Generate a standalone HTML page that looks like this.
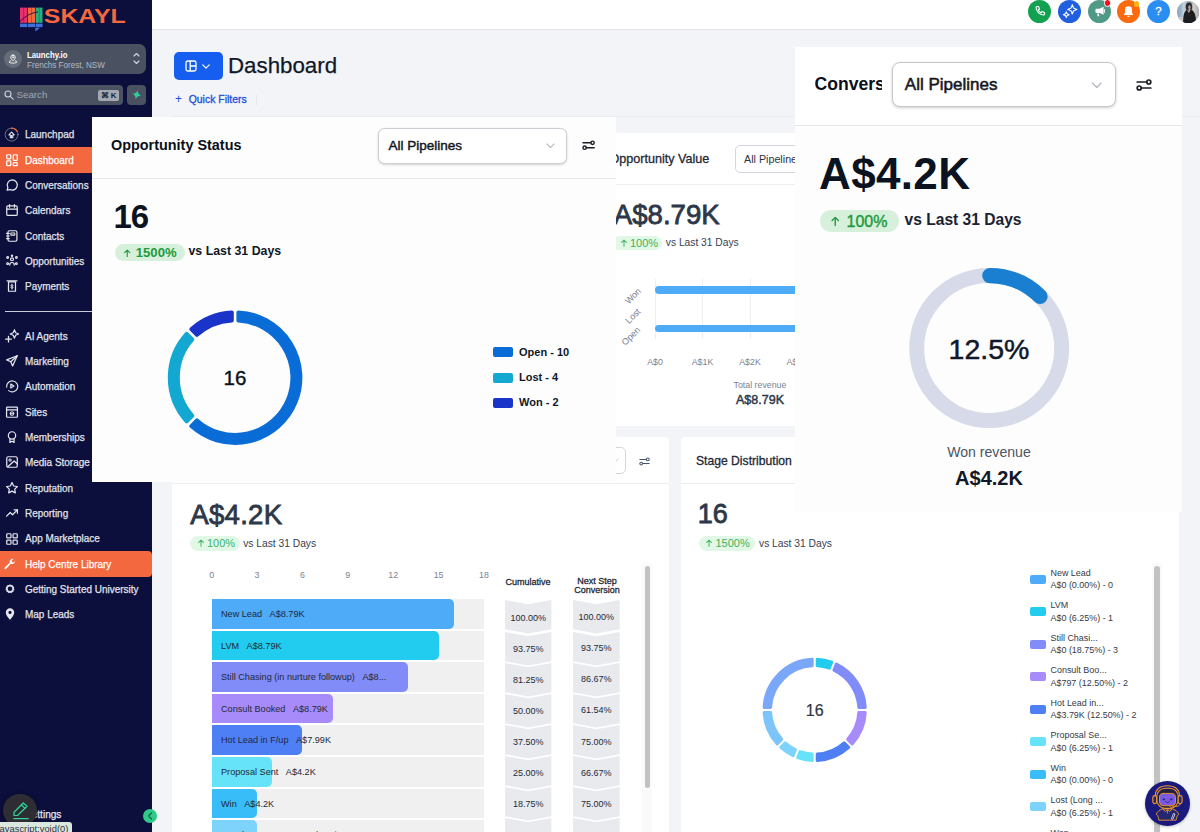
<!DOCTYPE html>
<html lang="en">
<head>
<meta charset="utf-8">
<title>Dashboard</title>
<style>
*{box-sizing:border-box;margin:0;padding:0}
html,body{width:1200px;height:832px;overflow:hidden;background:#f2f4f8;font-family:"Liberation Sans",sans-serif;color:#1f2937}
.abs{position:absolute}
.nw{white-space:nowrap}
#root{position:relative;width:1200px;height:832px;overflow:hidden;background:#f2f4f8}
#side{left:0;top:0;width:152px;height:832px;background:#0c0e3b}
#topbar{left:152px;top:0;width:1048px;height:30px;background:#fff;border-bottom:1px solid #e1e3e8}
.acct{left:0;top:44.2px;width:146px;height:29.6px;background:#4a5262;border-radius:0 7px 7px 0}
.acct .t1{left:26.5px;top:5.4px;font-size:8.8px;font-weight:700;color:#fff;transform:scaleX(.885);transform-origin:0 50%}
.acct .t2{left:26.5px;top:16.1px;font-size:8.6px;color:#b4b9c4;transform:scaleX(.943);transform-origin:0 50%}
.acct .av{left:4px;top:5.5px;width:18px;height:18px;border-radius:50%;background:#656c79}
.srch{left:0;top:85px;width:122.5px;height:20px;background:#4a5262;border-radius:0 4px 4px 0}
.srch .st{left:16.6px;top:4.3px;font-size:9.7px;color:#a0a6b2}
.srch .kb{left:98px;top:4.5px;width:21px;height:11.5px;background:#a3a8b2;border-radius:2px;font-size:8px;color:#20242f;text-align:center;line-height:11.5px;font-weight:700}
.gbtn{left:126.5px;top:85px;width:19.5px;height:20px;background:#4a5262;border-radius:4px}
.mi{left:0;width:152px;height:25.5px;color:#e2e4ec;font-size:11px;white-space:nowrap}
.mi span{position:absolute;left:24.6px;top:6.5px;transform:scaleX(.905);transform-origin:0 50%;-webkit-text-stroke:.25px currentColor}
.mi svg{position:absolute;left:5px;top:5.6px;width:14px;height:14px;stroke:#e6e8f0;fill:none;stroke-width:1.4;stroke-linecap:round;stroke-linejoin:round}
.mi.act{background:#f4683f;color:#fff}
.mi.act svg{stroke:#fff}
.card{background:#fff;border-radius:4px}
.pill{background:#ddf6e3;color:#3aa856;border-radius:9px;white-space:nowrap}
.hb{border-bottom:1px solid #e8eaee}
.sel{border:1px solid #d4d7dd;border-radius:5px;background:#fff}
.med{-webkit-text-stroke:.3px currentColor}
</style>
</head>
<body>
<div id="root">
<div id="topbar" class="abs"></div>

<div class="abs" style="left:1028px;top:-0.5px;width:23px;height:23px;border-radius:50%;background:#12a150"></div>
<svg class="abs" style="left:1033.5px;top:5px;width:12px;height:12px" viewBox="0 0 24 24" fill="none" stroke="#fff" stroke-width="2.2" stroke-linecap="round" stroke-linejoin="round"><path d="M6 3h3l2 5-2.5 1.5a11 11 0 0 0 6 6L16 13l5 2v3a2 2 0 0 1-2 2A16 16 0 0 1 4 5a2 2 0 0 1 2-2z"/></svg>
<div class="abs" style="left:1058px;top:-0.5px;width:23px;height:23px;border-radius:50%;background:#1f5fe0"></div>
<svg class="abs" style="left:1061.5px;top:3px;width:16px;height:16px" viewBox="0 0 16 16" fill="none" stroke="#fff" stroke-width="1.1" stroke-linejoin="round"><path d="M10.3 1.8l1.3 3.3 3.3 1.3-3.3 1.3-1.3 3.3L9 7.7 5.7 6.4 9 5.1z"/><path d="M4.3 8.8l.85 2.05 2.05.85-2.05.85-.85 2.05-.85-2.05-2.05-.85 2.05-.85z"/></svg>
<div class="abs" style="left:1087.5px;top:-0.5px;width:23px;height:23px;border-radius:50%;background:#4f9a86"></div>
<svg class="abs" style="left:1092.5px;top:5px;width:13px;height:13px" viewBox="0 0 16 16" fill="#fff" stroke="none"><path d="M13 2v10l-5-2.2H4.5A1.5 1.5 0 0 1 3 8.3V6.2a1.5 1.5 0 0 1 1.5-1.5H8z"/><path d="M5 10.5h2.2l.6 3.3H5.8z"/><path d="M14 5.5v3.6" stroke="#fff" stroke-width="1.2" stroke-linecap="round"/></svg>
<div class="abs" style="left:1103.5px;top:-1px;width:7.5px;height:7.5px;border-radius:50%;background:#f0101c;border:1px solid #fff"></div>
<div class="abs" style="left:1117.3px;top:-0.5px;width:23px;height:23px;border-radius:50%;background:#fb6a0e"></div>
<svg class="abs" style="left:1122.3px;top:4.5px;width:13px;height:13px" viewBox="0 0 16 16" fill="#fff" stroke="none"><path d="M8 1.5a4.3 4.3 0 0 0-4.3 4.3v3.4L2.4 11.6v.7h11.2v-.7l-1.3-2.4V5.8A4.3 4.3 0 0 0 8 1.5z"/><path d="M6.5 13.2a1.5 1.5 0 0 0 3 0z"/></svg>
<div class="abs" style="left:1133.5px;top:1px;width:5.5px;height:5.5px;border-radius:50%;background:#fbb514"></div>
<div class="abs" style="left:1147px;top:-0.5px;width:23px;height:23px;border-radius:50%;background:#2a8df2;color:#fff;font-size:11.5px;text-align:center;line-height:23px;-webkit-text-stroke:.3px #fff">?</div>
<svg class="abs" style="left:1176.8px;top:.5px;width:22.4px;height:22.4px" viewBox="0 0 62 62"><defs><clipPath id="avc"><circle cx="31" cy="31" r="31"/></clipPath><linearGradient id="avg" x1="0" x2="1" y1="0" y2="0"><stop offset="0" stop-color="#8fa3b3"/><stop offset=".18" stop-color="#9db6cc"/><stop offset=".3" stop-color="#c5d3dc"/><stop offset=".62" stop-color="#9a9c9c"/><stop offset=".75" stop-color="#cfcfcf"/><stop offset="1" stop-color="#a9aaab"/></linearGradient></defs>
<g clip-path="url(#avc)"><rect width="62" height="62" fill="url(#avg)"/><rect x="0" y="44" width="20" height="18" fill="#c9c9cb"/>
<ellipse cx="33" cy="16" rx="9" ry="12" fill="#2a2d35"/><ellipse cx="34.5" cy="17.5" rx="3.3" ry="5.5" fill="#b79a8d"/><rect x="32" y="22" width="5" height="12" fill="#c4a99b"/>
<path d="M17 62C17 40 20 28 27 25l6 8 5-9c9 2 15 12 15 38z" fill="#1b1c22"/><rect x="30" y="37" width="7" height="4" fill="#3a2318"/></g></svg>


<div class="abs" style="left:174px;top:52px;width:48.5px;height:27.5px;border-radius:5px;background:#155eef"></div>
<svg class="abs" style="left:185px;top:59.5px;width:12px;height:12px" viewBox="0 0 12 12" fill="none" stroke="#fff" stroke-width="1.3" stroke-linejoin="round"><rect x="1" y="1" width="10" height="10" rx="1.8"/><path d="M5.2 1v10M5.2 6H11"/></svg>
<svg class="abs" style="left:201.5px;top:63.5px;width:8px;height:5px" viewBox="0 0 10 6" fill="none" stroke="#fff" stroke-width="1.5" stroke-linecap="round" stroke-linejoin="round"><path d="M1 1l4 4 4-4"/></svg>
<div class="abs nw" style="left:228px;top:52.5px;font-size:22.3px;line-height:26px;color:#101828;-webkit-text-stroke:.25px #101828">Dashboard</div>
<div class="abs nw" style="left:175px;top:92.5px;font-size:12px;line-height:13px;color:#1d4ed8">+</div>
<div class="abs nw med" style="left:188.7px;top:93px;font-size:10.45px;line-height:13px;color:#1d4ed8">Quick Filters</div>
<div class="abs" style="left:256px;top:95px;width:1px;height:10px;background:#e4e7ec"></div>
<div class="abs" style="left:172px;top:115.5px;width:1028px;height:1px;background:#e9ebf0"></div>


<div class="abs card" style="left:500px;top:133px;width:340px;height:292.7px"></div>
<div class="abs" style="left:500px;top:184px;width:340px;height:1px;background:#eceef2"></div>
<div class="abs nw med" style="left:609.5px;top:151.5px;font-size:12.6px;line-height:14px;color:#1f2937">Opportunity Value</div>
<div class="abs sel" style="left:734.5px;top:144.5px;width:120px;height:28.5px;border-radius:5px"></div>
<div class="abs nw" style="left:743.5px;top:151.5px;font-size:11.6px;line-height:14px;color:#2b3340;transform:scaleX(.925);transform-origin:0 50%">All Pipelines</div>
<div class="abs nw" style="left:613.8px;top:199.3px;font-size:27.6px;line-height:31px;color:#2d3748;-webkit-text-stroke:.8px #2d3748">A$8.79K</div>
<div class="abs pill" style="left:612px;top:235.5px;width:49.7px;height:14.3px;border-radius:7px;background:#e2f8e7"></div>
<svg class="abs" style="left:619.5px;top:238.5px;width:8px;height:8px" viewBox="0 0 10 10" fill="none" stroke="#4ab765" stroke-width="1.3" stroke-linecap="round" stroke-linejoin="round"><path d="M5 9V1.5M2 4.3l3-3 3 3"/></svg>
<div class="abs nw" style="left:630px;top:236.5px;font-size:11px;line-height:13px;color:#41b25f">100%</div>
<div class="abs nw" style="left:665.8px;top:235.5px;font-size:10.25px;line-height:13px;color:#374151">vs Last 31 Days</div>
<div class="abs" style="left:655px;top:279px;width:1px;height:60px;background:#eceef2"></div><div class="abs" style="left:702.2px;top:279px;width:1px;height:60px;background:#eceef2"></div><div class="abs" style="left:749.8px;top:279px;width:1px;height:60px;background:#eceef2"></div>
<div class="abs" style="left:655px;top:286px;width:160px;height:7.5px;border-radius:4px 0 0 4px;background:#4dabf7"></div>
<div class="abs" style="left:655px;top:324.5px;width:160px;height:7.5px;border-radius:4px 0 0 4px;background:#4dabf7"></div>
<div class="abs nw" style="left:612.5px;top:290px;width:40px;height:12px;line-height:12px;text-align:center;font-size:9px;color:#7b8190;transform:rotate(-45deg)">Won</div><div class="abs nw" style="left:612.5px;top:309.5px;width:40px;height:12px;line-height:12px;text-align:center;font-size:9px;color:#7b8190;transform:rotate(-45deg)">Lost</div><div class="abs nw" style="left:611px;top:329.5px;width:40px;height:12px;line-height:12px;text-align:center;font-size:9px;color:#7b8190;transform:rotate(-45deg)">Open</div>
<div class="abs nw" style="left:635px;top:355.5px;width:40px;text-align:center;font-size:8.8px;line-height:12px;color:#7b8190">A$0</div>
<div class="abs nw" style="left:682.5px;top:355.5px;width:40px;text-align:center;font-size:8.8px;line-height:12px;color:#7b8190">A$1K</div>
<div class="abs nw" style="left:730px;top:355.5px;width:40px;text-align:center;font-size:8.8px;line-height:12px;color:#7b8190">A$2K</div>
<div class="abs nw" style="left:786.5px;top:355.5px;font-size:8.8px;line-height:12px;color:#7b8190">A$3K</div>
<div class="abs nw" style="left:720px;top:378.5px;width:80px;text-align:center;font-size:8.8px;line-height:12px;color:#7b8190">Total revenue</div>
<div class="abs nw" style="left:720px;top:392.5px;width:80px;text-align:center;font-size:12.5px;line-height:15px;color:#2d3748;-webkit-text-stroke:.45px #2d3748">A$8.79K</div>


<div class="abs card" style="left:172px;top:437.4px;width:497px;height:400px"></div>
<div class="abs" style="left:172px;top:482.5px;width:497px;height:1px;background:#eceef2"></div>
<div class="abs sel" style="left:520px;top:447.2px;width:106px;height:27.2px"></div>
<svg class="abs" style="left:612px;top:458px;width:7px;height:4.5px" viewBox="0 0 10 6" fill="none" stroke="#b8bcc4" stroke-width="1.2" stroke-linecap="round" stroke-linejoin="round"><path d="M1 1l4 4 4-4"/></svg>
<svg class="abs" style="left:638.5px;top:456.5px;width:11px;height:9px" viewBox="0 0 16 12" fill="none" stroke="#475467" stroke-width="1.5" stroke-linecap="round"><path d="M1.2 3h9.6M5.2 9h9.6"/><circle cx="12.8" cy="3" r="2"/><circle cx="3.2" cy="9" r="2"/></svg>
<div class="abs nw" style="left:190.3px;top:498.5px;font-size:27.6px;line-height:31px;color:#2d3748;-webkit-text-stroke:.8px #2d3748;letter-spacing:.25px">A$4.2K</div>
<div class="abs pill" style="left:190px;top:535.7px;width:49.5px;height:15.3px;border-radius:7.5px;background:#e2f8e7"></div>
<svg class="abs" style="left:196.5px;top:539.2px;width:8px;height:8px" viewBox="0 0 10 10" fill="none" stroke="#4ab765" stroke-width="1.3" stroke-linecap="round" stroke-linejoin="round"><path d="M5 9V1.5M2 4.3l3-3 3 3"/></svg>
<div class="abs nw" style="left:207px;top:537px;font-size:11px;line-height:13px;color:#41b25f">100%</div>
<div class="abs nw" style="left:243.2px;top:536.8px;font-size:10.25px;line-height:13px;color:#374151">vs Last 31 Days</div>
<div class="abs nw" style="left:196.6px;top:568.8px;width:30px;text-align:center;font-size:8.8px;line-height:12px;color:#7b8190">0</div><div class="abs nw" style="left:242.0px;top:568.8px;width:30px;text-align:center;font-size:8.8px;line-height:12px;color:#7b8190">3</div><div class="abs nw" style="left:287.4px;top:568.8px;width:30px;text-align:center;font-size:8.8px;line-height:12px;color:#7b8190">6</div><div class="abs nw" style="left:332.8px;top:568.8px;width:30px;text-align:center;font-size:8.8px;line-height:12px;color:#7b8190">9</div><div class="abs nw" style="left:378.2px;top:568.8px;width:30px;text-align:center;font-size:8.8px;line-height:12px;color:#7b8190">12</div><div class="abs nw" style="left:423.6px;top:568.8px;width:30px;text-align:center;font-size:8.8px;line-height:12px;color:#7b8190">15</div><div class="abs nw" style="left:468.9px;top:568.8px;width:30px;text-align:center;font-size:8.8px;line-height:12px;color:#7b8190">18</div>
<div class="abs nw med" style="left:498px;top:575.5px;width:60px;text-align:center;font-size:9px;line-height:12px;color:#1f2937">Cumulative</div>
<div class="abs nw med" style="left:566px;top:575.5px;width:62px;text-align:center;font-size:9px;line-height:9px;color:#1f2937;padding-top:1.5px">Next Step<br>Conversion</div>
<div class="abs" style="left:211.6px;top:599.2px;width:272.3px;height:29.5px;background:#f0f0f1"></div><div class="abs" style="left:211.6px;top:599.2px;width:242.1px;height:29.5px;background:#4dabf7;border-radius:0 5px 5px 0"></div><div class="abs nw" style="left:221px;top:608.2px;font-size:9.15px;line-height:12px;color:#1f2937">New Lead<span style="display:inline-block;width:7.5px"></span>A$8.79K</div><svg class="abs" style="left:505px;top:600.4px;width:46.4px;height:34.5px;overflow:visible" viewBox="0 0 46.4 34.5"><polygon points="0,0 23.2,4.2 46.4,0 46.4,29.3 23.2,33.5 0,29.3" fill="#e8eaee"/></svg><div class="abs nw" style="left:505px;top:611.9px;width:46.4px;text-align:center;font-size:9px;line-height:12px;color:#1f2937">100.00%</div><svg class="abs" style="left:573px;top:600.4px;width:46.7px;height:34.5px;overflow:visible" viewBox="0 0 46.7 34.5"><polygon points="0,0 23.4,4.2 46.7,0 46.7,29.3 23.4,33.5 0,29.3" fill="#e8eaee"/></svg><div class="abs nw" style="left:573px;top:611.2px;width:46.7px;text-align:center;font-size:9px;line-height:12px;color:#1f2937">100.00%</div><div class="abs" style="left:211.6px;top:630.8px;width:272.3px;height:29.5px;background:#f0f0f1"></div><div class="abs" style="left:211.6px;top:630.8px;width:227.0px;height:29.5px;background:#22ccee;border-radius:0 5px 5px 0"></div><div class="abs nw" style="left:221px;top:639.8px;font-size:9.15px;line-height:12px;color:#1f2937">LVM<span style="display:inline-block;width:7.5px"></span>A$8.79K</div><svg class="abs" style="left:505px;top:631.5px;width:46.4px;height:34.5px;overflow:visible" viewBox="0 0 46.4 34.5"><polygon points="0,0 23.2,4.2 46.4,0 46.4,29.3 23.2,33.5 0,29.3" fill="#e8eaee"/></svg><div class="abs nw" style="left:505px;top:643.0px;width:46.4px;text-align:center;font-size:9px;line-height:12px;color:#1f2937">93.75%</div><svg class="abs" style="left:573px;top:631.5px;width:46.7px;height:34.5px;overflow:visible" viewBox="0 0 46.7 34.5"><polygon points="0,0 23.4,4.2 46.7,0 46.7,29.3 23.4,33.5 0,29.3" fill="#e8eaee"/></svg><div class="abs nw" style="left:573px;top:642.3px;width:46.7px;text-align:center;font-size:9px;line-height:12px;color:#1f2937">93.75%</div><div class="abs" style="left:211.6px;top:662.3px;width:272.3px;height:29.5px;background:#f0f0f1"></div><div class="abs" style="left:211.6px;top:662.3px;width:196.7px;height:29.5px;background:#818cf8;border-radius:0 5px 5px 0"></div><div class="abs nw" style="left:221px;top:671.3px;font-size:9.15px;line-height:12px;color:#1f2937">Still Chasing (in nurture followup)<span style="display:inline-block;width:7.5px"></span>A$8...</div><svg class="abs" style="left:505px;top:662.5px;width:46.4px;height:34.5px;overflow:visible" viewBox="0 0 46.4 34.5"><polygon points="0,0 23.2,4.2 46.4,0 46.4,29.3 23.2,33.5 0,29.3" fill="#e8eaee"/></svg><div class="abs nw" style="left:505px;top:674.0px;width:46.4px;text-align:center;font-size:9px;line-height:12px;color:#1f2937">81.25%</div><svg class="abs" style="left:573px;top:662.5px;width:46.7px;height:34.5px;overflow:visible" viewBox="0 0 46.7 34.5"><polygon points="0,0 23.4,4.2 46.7,0 46.7,29.3 23.4,33.5 0,29.3" fill="#e8eaee"/></svg><div class="abs nw" style="left:573px;top:673.3px;width:46.7px;text-align:center;font-size:9px;line-height:12px;color:#1f2937">86.67%</div><div class="abs" style="left:211.6px;top:693.9px;width:272.3px;height:29.5px;background:#f0f0f1"></div><div class="abs" style="left:211.6px;top:693.9px;width:121.0px;height:29.5px;background:#a78bfa;border-radius:0 5px 5px 0"></div><div class="abs nw" style="left:221px;top:702.9px;font-size:9.15px;line-height:12px;color:#1f2937">Consult Booked<span style="display:inline-block;width:7.5px"></span>A$8.79K</div><svg class="abs" style="left:505px;top:693.6px;width:46.4px;height:34.5px;overflow:visible" viewBox="0 0 46.4 34.5"><polygon points="0,0 23.2,4.2 46.4,0 46.4,29.3 23.2,33.5 0,29.3" fill="#e8eaee"/></svg><div class="abs nw" style="left:505px;top:705.1px;width:46.4px;text-align:center;font-size:9px;line-height:12px;color:#1f2937">50.00%</div><svg class="abs" style="left:573px;top:693.6px;width:46.7px;height:34.5px;overflow:visible" viewBox="0 0 46.7 34.5"><polygon points="0,0 23.4,4.2 46.7,0 46.7,29.3 23.4,33.5 0,29.3" fill="#e8eaee"/></svg><div class="abs nw" style="left:573px;top:704.4px;width:46.7px;text-align:center;font-size:9px;line-height:12px;color:#1f2937">61.54%</div><div class="abs" style="left:211.6px;top:725.4px;width:272.3px;height:29.5px;background:#f0f0f1"></div><div class="abs" style="left:211.6px;top:725.4px;width:90.8px;height:29.5px;background:#4f7ff5;border-radius:0 5px 5px 0"></div><div class="abs nw" style="left:221px;top:734.4px;font-size:9.15px;line-height:12px;color:#1f2937">Hot Lead in F/up<span style="display:inline-block;width:7.5px"></span>A$7.99K</div><svg class="abs" style="left:505px;top:724.7px;width:46.4px;height:34.5px;overflow:visible" viewBox="0 0 46.4 34.5"><polygon points="0,0 23.2,4.2 46.4,0 46.4,29.3 23.2,33.5 0,29.3" fill="#e8eaee"/></svg><div class="abs nw" style="left:505px;top:736.2px;width:46.4px;text-align:center;font-size:9px;line-height:12px;color:#1f2937">37.50%</div><svg class="abs" style="left:573px;top:724.7px;width:46.7px;height:34.5px;overflow:visible" viewBox="0 0 46.7 34.5"><polygon points="0,0 23.4,4.2 46.7,0 46.7,29.3 23.4,33.5 0,29.3" fill="#e8eaee"/></svg><div class="abs nw" style="left:573px;top:735.5px;width:46.7px;text-align:center;font-size:9px;line-height:12px;color:#1f2937">75.00%</div><div class="abs" style="left:211.6px;top:757.0px;width:272.3px;height:29.5px;background:#f0f0f1"></div><div class="abs" style="left:211.6px;top:757.0px;width:60.5px;height:29.5px;background:#67e3f9;border-radius:0 5px 5px 0"></div><div class="abs nw" style="left:221px;top:766.0px;font-size:9.15px;line-height:12px;color:#1f2937">Proposal Sent<span style="display:inline-block;width:7.5px"></span>A$4.2K</div><svg class="abs" style="left:505px;top:755.8px;width:46.4px;height:34.5px;overflow:visible" viewBox="0 0 46.4 34.5"><polygon points="0,0 23.2,4.2 46.4,0 46.4,29.3 23.2,33.5 0,29.3" fill="#e8eaee"/></svg><div class="abs nw" style="left:505px;top:767.2px;width:46.4px;text-align:center;font-size:9px;line-height:12px;color:#1f2937">25.00%</div><svg class="abs" style="left:573px;top:755.8px;width:46.7px;height:34.5px;overflow:visible" viewBox="0 0 46.7 34.5"><polygon points="0,0 23.4,4.2 46.7,0 46.7,29.3 23.4,33.5 0,29.3" fill="#e8eaee"/></svg><div class="abs nw" style="left:573px;top:766.5px;width:46.7px;text-align:center;font-size:9px;line-height:12px;color:#1f2937">66.67%</div><div class="abs" style="left:211.6px;top:788.5px;width:272.3px;height:29.5px;background:#f0f0f1"></div><div class="abs" style="left:211.6px;top:788.5px;width:45.4px;height:29.5px;background:#38bdf8;border-radius:0 5px 5px 0"></div><div class="abs nw" style="left:221px;top:797.5px;font-size:9.15px;line-height:12px;color:#1f2937">Win<span style="display:inline-block;width:7.5px"></span>A$4.2K</div><svg class="abs" style="left:505px;top:786.8px;width:46.4px;height:34.5px;overflow:visible" viewBox="0 0 46.4 34.5"><polygon points="0,0 23.2,4.2 46.4,0 46.4,29.3 23.2,33.5 0,29.3" fill="#e8eaee"/></svg><div class="abs nw" style="left:505px;top:798.3px;width:46.4px;text-align:center;font-size:9px;line-height:12px;color:#1f2937">18.75%</div><svg class="abs" style="left:573px;top:786.8px;width:46.7px;height:34.5px;overflow:visible" viewBox="0 0 46.7 34.5"><polygon points="0,0 23.4,4.2 46.7,0 46.7,29.3 23.4,33.5 0,29.3" fill="#e8eaee"/></svg><div class="abs nw" style="left:573px;top:797.6px;width:46.7px;text-align:center;font-size:9px;line-height:12px;color:#1f2937">75.00%</div><div class="abs" style="left:211.6px;top:820.1px;width:272.3px;height:29.5px;background:#f0f0f1"></div><div class="abs" style="left:211.6px;top:820.1px;width:45.4px;height:29.5px;background:#7dd3fc;border-radius:0 5px 5px 0"></div><div class="abs nw" style="left:221px;top:829.1px;font-size:9.15px;line-height:12px;color:#1f2937">Lost (Long term nurture)<span style="display:inline-block;width:7.5px"></span>A$4.2K</div><svg class="abs" style="left:505px;top:817.9px;width:46.4px;height:34.5px;overflow:visible" viewBox="0 0 46.4 34.5"><polygon points="0,0 23.2,4.2 46.4,0 46.4,29.3 23.2,33.5 0,29.3" fill="#e8eaee"/></svg><div class="abs nw" style="left:505px;top:829.4px;width:46.4px;text-align:center;font-size:9px;line-height:12px;color:#1f2937">18.75%</div><svg class="abs" style="left:573px;top:817.9px;width:46.7px;height:34.5px;overflow:visible" viewBox="0 0 46.7 34.5"><polygon points="0,0 23.4,4.2 46.7,0 46.7,29.3 23.4,33.5 0,29.3" fill="#e8eaee"/></svg><div class="abs nw" style="left:573px;top:828.7px;width:46.7px;text-align:center;font-size:9px;line-height:12px;color:#1f2937">100.00%</div>
<div class="abs" style="left:641.5px;top:563px;width:10px;height:270px;background:#fafafa"></div>
<div class="abs" style="left:644.6px;top:565.5px;width:5.4px;height:222px;border-radius:3px;background:#c2c2c2"></div>


<div class="abs card" style="left:681.3px;top:437.4px;width:497.7px;height:400px"></div>
<div class="abs" style="left:681.3px;top:482.5px;width:497.7px;height:1px;background:#eceef2"></div>
<div class="abs nw med" style="left:696px;top:453.5px;font-size:12.15px;line-height:14px;color:#1f2937">Stage Distribution</div>
<div class="abs nw" style="left:697.8px;top:498.5px;font-size:27px;line-height:31px;color:#2d3748;-webkit-text-stroke:.8px #2d3748">16</div>
<div class="abs pill" style="left:698.7px;top:535.7px;width:56.3px;height:15.3px;border-radius:7.5px;background:#e2f8e7"></div>
<svg class="abs" style="left:705px;top:539.2px;width:8px;height:8px" viewBox="0 0 10 10" fill="none" stroke="#4ab765" stroke-width="1.3" stroke-linecap="round" stroke-linejoin="round"><path d="M5 9V1.5M2 4.3l3-3 3 3"/></svg>
<div class="abs nw" style="left:715.5px;top:537px;font-size:11px;line-height:13px;color:#41b25f">1500%</div>
<div class="abs nw" style="left:759px;top:536.8px;font-size:10.25px;line-height:13px;color:#374151">vs Last 31 Days</div>
<svg class="abs" style="left:0;top:0;width:1200px;height:832px" viewBox="0 0 1200 832"><path d="M817.20 659.36A50.60 50.60 0 0 1 831.73 662.25L829.28 668.17A44.20 44.20 0 0 0 817.20 665.77Z" fill="#22ccee" stroke="#22ccee" stroke-width="3.0" stroke-linejoin="round"/><path d="M836.35 664.17A50.60 50.60 0 0 1 865.24 707.40L858.83 707.40A44.20 44.20 0 0 0 833.90 670.09Z" fill="#818cf8" stroke="#818cf8" stroke-width="3.0" stroke-linejoin="round"/><path d="M865.24 712.40A50.60 50.60 0 0 1 852.20 743.87L847.67 739.34A44.20 44.20 0 0 0 858.83 712.40Z" fill="#a78bfa" stroke="#a78bfa" stroke-width="3.0" stroke-linejoin="round"/><path d="M848.67 747.40A50.60 50.60 0 0 1 817.20 760.44L817.20 754.03A44.20 44.20 0 0 0 844.14 742.87Z" fill="#4f7ff5" stroke="#4f7ff5" stroke-width="3.0" stroke-linejoin="round"/><path d="M812.20 760.44A50.60 50.60 0 0 1 797.67 757.55L800.12 751.63A44.20 44.20 0 0 0 812.20 754.03Z" fill="#67e3f9" stroke="#67e3f9" stroke-width="3.0" stroke-linejoin="round"/><path d="M793.05 755.63A50.60 50.60 0 0 1 780.73 747.40L785.26 742.87A44.20 44.20 0 0 0 795.50 749.71Z" fill="#7dd3fc" stroke="#7dd3fc" stroke-width="3.0" stroke-linejoin="round"/><path d="M777.20 743.87A50.60 50.60 0 0 1 764.16 712.40L770.57 712.40A44.20 44.20 0 0 0 781.73 739.34Z" fill="#7cc4fa" stroke="#7cc4fa" stroke-width="3.0" stroke-linejoin="round"/><path d="M764.16 707.40A50.60 50.60 0 0 1 812.20 659.36L812.20 665.77A44.20 44.20 0 0 0 770.57 707.40Z" fill="#7aa7f8" stroke="#7aa7f8" stroke-width="3.0" stroke-linejoin="round"/></svg>
<div class="abs nw" style="left:794.7px;top:700.7px;width:40px;text-align:center;font-size:16px;line-height:20px;color:#2d3748;-webkit-text-stroke:.2px #2d3748">16</div>
<div class="abs" style="left:1029.8px;top:574.5px;width:16.2px;height:9px;border-radius:2px;background:#4dabf7"></div><div class="abs nw" style="left:1050.5px;top:566.5px;font-size:8.95px;line-height:12.7px;color:#333b48">New Lead<br>A$0 (0.00%) - 0</div><div class="abs" style="left:1029.8px;top:607.0px;width:16.2px;height:9px;border-radius:2px;background:#22ccee"></div><div class="abs nw" style="left:1050.5px;top:599.0px;font-size:8.95px;line-height:12.7px;color:#333b48">LVM<br>A$0 (6.25%) - 1</div><div class="abs" style="left:1029.8px;top:639.5px;width:16.2px;height:9px;border-radius:2px;background:#818cf8"></div><div class="abs nw" style="left:1050.5px;top:631.5px;font-size:8.95px;line-height:12.7px;color:#333b48">Still Chasi...<br>A$0 (18.75%) - 3</div><div class="abs" style="left:1029.8px;top:672.0px;width:16.2px;height:9px;border-radius:2px;background:#a78bfa"></div><div class="abs nw" style="left:1050.5px;top:664.0px;font-size:8.95px;line-height:12.7px;color:#333b48">Consult Boo...<br>A$797 (12.50%) - 2</div><div class="abs" style="left:1029.8px;top:704.5px;width:16.2px;height:9px;border-radius:2px;background:#4f7ff5"></div><div class="abs nw" style="left:1050.5px;top:696.5px;font-size:8.95px;line-height:12.7px;color:#333b48">Hot Lead in...<br>A$3.79K (12.50%) - 2</div><div class="abs" style="left:1029.8px;top:737.0px;width:16.2px;height:9px;border-radius:2px;background:#67e3f9"></div><div class="abs nw" style="left:1050.5px;top:729.0px;font-size:8.95px;line-height:12.7px;color:#333b48">Proposal Se...<br>A$0 (6.25%) - 1</div><div class="abs" style="left:1029.8px;top:769.5px;width:16.2px;height:9px;border-radius:2px;background:#38bdf8"></div><div class="abs nw" style="left:1050.5px;top:761.5px;font-size:8.95px;line-height:12.7px;color:#333b48">Win<br>A$0 (0.00%) - 0</div><div class="abs" style="left:1029.8px;top:802.0px;width:16.2px;height:9px;border-radius:2px;background:#7dd3fc"></div><div class="abs nw" style="left:1050.5px;top:794.0px;font-size:8.95px;line-height:12.7px;color:#333b48">Lost (Long ...<br>A$0 (6.25%) - 1</div><div class="abs" style="left:1029.8px;top:834.5px;width:16.2px;height:9px;border-radius:2px;background:#93c5fd"></div><div class="abs nw" style="left:1050.5px;top:826.5px;font-size:8.95px;line-height:12.7px;color:#333b48">Won<br>A$0 (0.00%) - 0</div>
<div class="abs" style="left:1151.5px;top:563px;width:10px;height:270px;background:#fafafa"></div>
<div class="abs" style="left:1154.2px;top:565.5px;width:5.6px;height:275px;border-radius:3px;background:#c2c2c2"></div>


<div id="side" class="abs">

<svg class="abs" style="left:0;top:0;width:152px;height:40px" viewBox="0 0 152 40">
<rect x="20" y="7.6" width="7.3" height="15.2" fill="#e8306c"/><rect x="27.9" y="7.6" width="7.3" height="15.2" fill="#f3683f"/><rect x="35.8" y="7.6" width="6.7" height="15.2" fill="#25b07d"/>
<path d="M23.6 7.6v15.2M31.5 7.6v15.2M39.2 7.6v15.2" stroke="#0c0e3b" stroke-width=".5" opacity=".55"/>
<rect x="20" y="23.6" width="7.3" height="3.5" fill="#3f6fd8"/><rect x="27.9" y="23.6" width="7.3" height="3.5" fill="#3f6fd8"/><rect x="35.8" y="23.6" width="6.7" height="3.5" fill="#3f6fd8"/>
<path d="M35.1 27.7h4.9L35.6 31.5z" fill="#3f6fd8"/>
<path d="M20 21.5C26 15.5 32 12.5 38 12" stroke="#0c0e3b" stroke-width=".9" fill="none"/>
<text x="43.8" y="22.5" textLength="82" lengthAdjust="spacingAndGlyphs" font-family="Liberation Sans, sans-serif" font-weight="700" font-size="20.5" fill="#f3683f">SKAYL</text>
</svg>

<div class="abs acct"><div class="abs av"></div>
<svg class="abs" style="left:8px;top:9.5px;width:10px;height:10px" viewBox="0 0 12 12" fill="none" stroke="#fff" stroke-width="1.1" stroke-linecap="round"><path d="M6 1.2a2.8 2.8 0 0 0-2.8 2.8C3.2 6 6 8.2 6 8.2S8.8 6 8.8 4A2.8 2.8 0 0 0 6 1.2z"/><circle cx="6" cy="4" r=".8"/><path d="M3.3 8.2C2 8.5 1.3 9 1.3 9.5c0 .8 2.1 1.4 4.7 1.4s4.7-.6 4.7-1.4c0-.5-.7-1-2-1.3"/></svg>
<div class="abs t1 nw">Launchy.io</div><div class="abs t2 nw">Frenchs Forest, NSW</div>
<svg class="abs" style="left:132.5px;top:8px;width:7px;height:13px" viewBox="0 0 7 13" fill="none" stroke="#d4d7de" stroke-width="1.1" stroke-linecap="round" stroke-linejoin="round"><path d="M1 4l2.5-2.5L6 4M1 9l2.5 2.5L6 9"/></svg>
</div>
<div class="abs srch"><svg class="abs" style="left:3.5px;top:5px;width:10px;height:10px" viewBox="0 0 10 10" fill="none" stroke="#cfd3db" stroke-width="1.1" stroke-linecap="round"><circle cx="4" cy="4" r="3"/><path d="M6.3 6.3 9.2 9.2"/></svg><div class="abs st nw">Search</div><div class="abs kb nw">&#8984; K</div></div>
<div class="abs gbtn"><svg class="abs" style="left:5.3px;top:5.3px;width:9.4px;height:9.4px" viewBox="0 0 10 10" fill="#2fd198"><path transform="rotate(14 5 5)" d="M5 0C5.4 2.8 7.2 4.6 10 5 7.2 5.4 5.4 7.2 5 10 4.6 7.2 2.8 5.4 0 5 2.8 4.6 4.6 2.8 5 0z"/></svg></div>
<div class="mi abs" style="top:121.75px"><svg viewBox="0 0 16 16" style="left:4.4px;top:5.2px;width:15.2px;height:15.2px"><circle cx="8" cy="8" r="6.8" stroke-width=".9" opacity=".5"/><path d="M8 11.3V8.6M5.2 8.4 8 5.3l2.8 3.1H9.3v2.9H6.7V8.4z" stroke-width="1.1"/><path d="M8 1.2a6.8 6.8 0 0 1 5.9 3.4" stroke="#f4683f" stroke-width="1.3"/></svg><span>Launchpad</span></div>
<div class="mi abs act" style="top:147.10px;width:92px"><svg viewBox="0 0 16 16"><rect x="2" y="2" width="4.6" height="4.6" rx=".8"/><rect x="9.4" y="2" width="4.6" height="6.4" rx=".8"/><rect x="2" y="9" width="4.6" height="5.4" rx=".8"/><rect x="9.4" y="11" width="4.6" height="3.4" rx=".8"/></svg><span>Dashboard</span></div>
<div class="mi abs" style="top:172.45px"><svg viewBox="0 0 16 16"><path d="M8.3 2.2a5.8 5.8 0 1 1-2.6 11L2.4 14l.9-3.1A5.8 5.8 0 0 1 8.3 2.2z"/></svg><span>Conversations</span></div>
<div class="mi abs" style="top:197.75px"><svg viewBox="0 0 16 16"><rect x="2" y="3.4" width="12" height="10.8" rx="1.4"/><path d="M2 7h12M5.2 1.8v3M10.8 1.8v3"/></svg><span>Calendars</span></div>
<div class="mi abs" style="top:223.05px"><svg viewBox="0 0 16 16"><rect x="3.4" y="2" width="10.2" height="12" rx="1.6"/><path d="M1.8 5h3M1.8 8h3M1.8 11h3"/><rect x="6.6" y="4.6" width="4.6" height="2.4" rx=".5" stroke-width="1.2"/></svg><span>Contacts</span></div>
<div class="mi abs" style="top:248.35px"><svg viewBox="0 0 16 16"><circle cx="8" cy="6" r="1.7"/><path d="M5.4 12.6c0-1.8 1.1-2.9 2.6-2.9s2.6 1.1 2.6 2.9"/><circle cx="3" cy="4" r="1" /><circle cx="13" cy="4" r="1"/><circle cx="3" cy="11" r="1"/><circle cx="13" cy="11" r="1"/><circle cx="8" cy="2" r=".7"/></svg><span>Opportunities</span></div>
<div class="mi abs" style="top:273.65px"><svg viewBox="0 0 16 16"><path d="M4 3.4h8v10.6H4z"/><path d="M2.4 2.2h11.2"/><path d="M9 7.2c-.3-.5-.8-.6-1.2-.6-.7 0-1.1.4-1.1.9 0 1.3 2.5.6 2.5 2 0 .6-.5 1-1.3 1-.6 0-1-.2-1.3-.7M8 6v5.6" stroke-width="1"/></svg><span>Payments</span></div>
<div class="mi abs" style="top:323.15px"><svg viewBox="0 0 16 16"><path d="M10.8 .8l1.4 3.5 3.5 1.4-3.5 1.4-1.4 3.5-1.4-3.5-3.5-1.4 3.5-1.4z" stroke-width="1.3"/><path d="M4 8.4v6.4M.8 11.6h6.4" stroke-width="1.5"/></svg><span>AI Agents</span></div>
<div class="mi abs" style="top:348.35px"><svg viewBox="0 0 16 16"><path d="M14 2 1.9 6.7l4.7 2.1 2.1 4.8z"/><path d="M6.6 8.8 14 2" /></svg><span>Marketing</span></div>
<div class="mi abs" style="top:373.65px"><svg viewBox="0 0 16 16"><path d="M4.2 13.3A6.3 6.3 0 1 0 2 9.3" stroke-width="1.3"/><path d="M6.6 5.8v4.4l3.6-2.2z" stroke-width="1.3"/></svg><span>Automation</span></div>
<div class="mi abs" style="top:399.05px"><svg viewBox="0 0 16 16"><rect x="1.8" y="2.4" width="12.4" height="11.6" rx=".8"/><path d="M1.8 5.6h12.4"/><circle cx="8" cy="9.8" r="2" stroke-width="1.2"/><path d="M6 9.8h4" stroke-width="1"/></svg><span>Sites</span></div>
<div class="mi abs" style="top:424.35px"><svg viewBox="0 0 16 16"><circle cx="8" cy="6.2" r="4.2"/><path d="M5.6 9.8v4.4l2.4-1.4 2.4 1.4V9.8"/></svg><span>Memberships</span></div>
<div class="mi abs" style="top:449.65px"><svg viewBox="0 0 16 16"><rect x="2" y="2" width="12" height="12" rx="1.8"/><circle cx="5.8" cy="5.8" r="1.3" stroke-width="1.2"/><path d="M3.2 13.4 10.4 6.8 14 10"/></svg><span>Media Storage</span></div>
<div class="mi abs" style="top:475.35px"><svg viewBox="0 0 16 16"><path d="M8 1.8l1.9 3.9 4.3.6-3.1 3 .7 4.3L8 11.6l-3.8 2 .7-4.3-3.1-3 4.3-.6z"/></svg><span>Reputation</span></div>
<div class="mi abs" style="top:500.65px"><svg viewBox="0 0 16 16"><path d="M1.8 11.6 6 7.4l2.6 2.6 5.6-5.6"/><path d="M10.4 4.4h3.8v3.8"/></svg><span>Reporting</span></div>
<div class="mi abs" style="top:525.95px"><svg viewBox="0 0 16 16"><rect x="2" y="2" width="4.8" height="4.8" rx=".8"/><rect x="9.2" y="2" width="4.8" height="4.8" rx=".8"/><rect x="2" y="9.2" width="4.8" height="4.8" rx=".8"/><rect x="9.2" y="9.2" width="4.8" height="4.8" rx=".8"/></svg><span>App Marketplace</span></div>
<div class="mi abs act" style="top:551.25px;border-radius:0 4px 4px 0;width:151.5px"><svg viewBox="0 0 16 16" style="left:3.2px;fill:#fff;stroke:none"><path d="M13.8 4.3a3.6 3.6 0 0 1-4.9 3.4l-5.2 5.8a1.2 1.2 0 0 1-1.8-1.6l5.8-5.2a3.6 3.6 0 0 1 4.5-4.6L9.9 4.4l.4 1.6 1.6.4 2.2-2.2c0 0-.3.1-.3.1z"/></svg><span>Help Centre Library</span></div>
<div class="mi abs" style="top:576.55px"><svg viewBox="0 0 16 16" style="left:3.2px;fill:#d8dbe6;stroke:none"><path d="M8 2.6 9.3 3.5l1.6-.2.6 1.5 1.4.8-.4 1.5.7 1.4-1.1 1.1-.1 1.6-1.5.4-.9 1.3L8 12.4l-1.6.5-.9-1.3-1.5-.4-.1-1.6-1.1-1.1.7-1.4-.4-1.5 1.4-.8.6-1.5 1.6.2z M8 5.2a2.6 2.6 0 1 0 0 5.2 2.6 2.6 0 0 0 0-5.2z" fill-rule="evenodd"/></svg><span>Getting Started University</span></div>
<div class="mi abs" style="top:601.85px"><svg viewBox="0 0 16 16" style="left:3.2px;fill:#e5e7ee;stroke:none"><path d="M8 1.4a4.8 4.8 0 0 0-4.8 4.8c0 3.4 4.8 8.4 4.8 8.4s4.8-5 4.8-8.4A4.8 4.8 0 0 0 8 1.4zm0 6.6a1.8 1.8 0 1 1 0-3.6 1.8 1.8 0 0 1 0 3.6z"/></svg><span>Map Leads</span></div>
<div class="abs" style="left:5px;top:311px;width:147px;height:1px;background:#c9ccd8"></div>
<div class="abs nw" style="left:24.6px;top:807.5px;font-size:11px;color:#e6e8f0;transform:scaleX(.915);transform-origin:0 50%;-webkit-text-stroke:.25px #e6e8f0">Settings</div>
<div class="abs" style="left:3.4px;top:793.5px;width:33.5px;height:33.5px;border-radius:50%;background:#2d2d33;box-shadow:0 1px 4px rgba(0,0,0,.5)"></div>
<svg class="abs" style="left:11.5px;top:800.5px;width:18px;height:19px" viewBox="0 0 18 19" fill="none" stroke="#2fd49a" stroke-width="1.2" stroke-linecap="round" stroke-linejoin="round"><path d="M2 14.5v-3.3L11.3 2l3.8 3.3-9.6 9.2z"/><path d="M9.3 4l3.8 3.4"/><path d="M1.8 17.6h14.4"/></svg>
</div>
<div class="abs" style="left:143.3px;top:808.7px;width:14.2px;height:14.2px;border-radius:50%;background:#2fc98a"></div>
<svg class="abs" style="left:146.9px;top:811.8px;width:6px;height:8px" viewBox="0 0 6 8" fill="none" stroke="#0d6b47" stroke-width="1.3" stroke-linecap="round" stroke-linejoin="round"><path d="M4.5 1 1.5 4l3 3"/></svg>
<div class="abs nw" style="left:0;top:822.2px;width:71.5px;height:10px;background:#dbe6df;border-radius:0 3px 0 0;font-size:9.4px;line-height:14px;color:#30343a;text-indent:-2.5px;overflow:hidden">javascript:void(0)</div>


<div class="abs" style="left:91.75px;top:117px;width:524.25px;height:365.3px;background:#fdfdfd"></div>
<div class="abs" style="left:91.75px;top:177.5px;width:524.25px;height:1px;background:#e4e6ea"></div>
<div class="abs nw" style="left:110.5px;top:135.5px;font-size:15.4px;line-height:18px;font-weight:700;color:#0b0f1a;transform:scaleX(.936);transform-origin:0 50%">Opportunity Status</div>
<div class="abs" style="left:378px;top:127.5px;width:188.5px;height:36px;border:1.5px solid #cbcdd2;border-radius:6.5px;background:#fff;box-shadow:0 1px 2.5px rgba(0,0,0,.16)"></div>
<div class="abs nw" style="left:388.5px;top:137.5px;font-size:13.5px;line-height:16px;color:#15181f;-webkit-text-stroke:.45px #15181f">All Pipelines</div>
<svg class="abs" style="left:545.5px;top:143px;width:9px;height:5.5px" viewBox="0 0 10 6" fill="none" stroke="#b5b8bf" stroke-width="1.2" stroke-linecap="round" stroke-linejoin="round"><path d="M1 1l4 4 4-4"/></svg>
<svg class="abs" style="left:581.5px;top:140.3px;width:13.2px;height:10.5px" viewBox="0 0 16 12" fill="none" stroke="#1a1d24" stroke-width="1.7" stroke-linecap="round"><path d="M1.2 3h9.6M5.2 9h9.6"/><circle cx="12.8" cy="3" r="2"/><circle cx="3.2" cy="9" r="2"/></svg>
<div class="abs nw" style="left:113.5px;top:197.5px;font-size:33px;line-height:38px;font-weight:700;color:#0b1220;letter-spacing:-1px">16</div>
<div class="abs" style="left:114.5px;top:244.3px;width:70px;height:17px;border-radius:8.5px;background:#d6f0db"></div>
<svg class="abs" style="left:122.5px;top:248.5px;width:8.5px;height:8.5px" viewBox="0 0 10 10" fill="none" stroke="#1d9a3c" stroke-width="1.3" stroke-linecap="round" stroke-linejoin="round"><path d="M5 9V1.5M2 4.3l3-3 3 3"/></svg>
<div class="abs nw" style="left:135.8px;top:245.3px;font-size:13.1px;line-height:15px;font-weight:700;color:#1d9a3c">1500%</div>
<div class="abs nw" style="left:188.5px;top:243.5px;font-size:12.35px;line-height:15px;font-weight:700;color:#111827">vs Last 31 Days</div>
<svg class="abs" style="left:0;top:0;width:1200px;height:832px" viewBox="0 0 1200 832"><path d="M238.40 312.38A65.30 65.30 0 1 1 191.32 426.05L196.98 420.38A57.30 57.30 0 1 0 238.40 320.39Z" fill="#0a6cd6" stroke="#0a6cd6" stroke-width="4.0" stroke-linejoin="round"/><path d="M186.65 421.38A65.30 65.30 0 0 1 186.65 333.82L192.32 339.48A57.30 57.30 0 0 0 192.32 415.72Z" fill="#13a8d2" stroke="#13a8d2" stroke-width="4.0" stroke-linejoin="round"/><path d="M191.32 329.15A65.30 65.30 0 0 1 231.80 312.38L231.80 320.39A57.30 57.30 0 0 0 196.98 334.82Z" fill="#1a33c9" stroke="#1a33c9" stroke-width="4.0" stroke-linejoin="round"/></svg>
<div class="abs nw" style="left:205px;top:366px;width:60px;text-align:center;font-size:20.5px;line-height:24px;color:#0b1220;-webkit-text-stroke:.4px #0b1220">16</div>
<div class="abs" style="left:493.2px;top:347.3px;width:20px;height:10.2px;border-radius:2px;background:#0a6cd6"></div><div class="abs nw" style="left:519px;top:345.8px;font-size:11px;line-height:13px;font-weight:700;color:#101828">Open - 10</div><div class="abs" style="left:493.2px;top:372.6px;width:20px;height:10.2px;border-radius:2px;background:#13a8d2"></div><div class="abs nw" style="left:519px;top:371.1px;font-size:11px;line-height:13px;font-weight:700;color:#101828">Lost - 4</div><div class="abs" style="left:493.2px;top:397.9px;width:20px;height:10.2px;border-radius:2px;background:#1a33c9"></div><div class="abs nw" style="left:519px;top:396.4px;font-size:11px;line-height:13px;font-weight:700;color:#101828">Won - 2</div>


<div class="abs" style="left:794.5px;top:46.8px;width:387.2px;height:465.3px;background:#fdfdfe"></div>
<div class="abs" style="left:794.5px;top:46.8px;width:387.2px;height:78.5px;background:#fff"></div>
<div class="abs" style="left:794.5px;top:125px;width:387.2px;height:1px;background:#e4e6ea"></div>
<div class="abs nw" style="left:814.5px;top:72.5px;width:67.5px;overflow:hidden;font-size:17.6px;line-height:22px;font-weight:700;color:#0b0f1a">Conversion Rate</div>
<div class="abs" style="left:891.5px;top:61.5px;width:224.5px;height:45.5px;border:1.8px solid #c6c8cd;border-radius:8px;background:#fff;box-shadow:0 1px 3px rgba(0,0,0,.2)"></div>
<div class="abs nw" style="left:904.8px;top:75px;font-size:17px;line-height:20px;color:#15181f;-webkit-text-stroke:.55px #15181f">All Pipelines</div>
<svg class="abs" style="left:1091px;top:81.5px;width:11.5px;height:6.5px" viewBox="0 0 10 6" fill="none" stroke="#b5b8bf" stroke-width="1.2" stroke-linecap="round" stroke-linejoin="round"><path d="M1 1l4 4 4-4"/></svg>
<svg class="abs" style="left:1136.4px;top:79px;width:16px;height:12px" viewBox="0 0 16 12" fill="none" stroke="#1a1d24" stroke-width="1.7" stroke-linecap="round"><path d="M1.2 3h9.6M5.2 9h9.6"/><circle cx="12.8" cy="3" r="2"/><circle cx="3.2" cy="9" r="2"/></svg>
<div class="abs nw" style="left:819px;top:149.8px;font-size:44px;line-height:48px;font-weight:700;color:#0b1220;letter-spacing:.35px">A$4.2K</div>
<div class="abs" style="left:820.2px;top:210.3px;width:79px;height:21.7px;border-radius:11px;background:#d6f0db"></div>
<svg class="abs" style="left:830px;top:215.5px;width:10.5px;height:10.5px" viewBox="0 0 10 10" fill="none" stroke="#1d9a3c" stroke-width="1.3" stroke-linecap="round" stroke-linejoin="round"><path d="M5 9V1.5M2 4.3l3-3 3 3"/></svg>
<div class="abs nw" style="left:846.5px;top:212px;font-size:16px;line-height:19px;color:#1d9a3c;-webkit-text-stroke:.4px #1d9a3c">100%</div>
<div class="abs nw" style="left:904.5px;top:209.5px;font-size:15.6px;line-height:19px;font-weight:700;color:#1b2230">vs Last 31 Days</div>
<svg class="abs" style="left:0;top:0;width:1200px;height:832px" viewBox="0 0 1200 832" fill="none"><circle cx="989.2" cy="348.1" r="72.5" stroke="#d7dbe9" stroke-width="15"/><path d="M989.83 275.60A72.5 72.5 0 0 1 1040.02 296.39" stroke="#1b7fd1" stroke-width="15.3" stroke-linecap="round"/></svg>
<div class="abs nw" style="left:939px;top:332px;width:100px;text-align:center;font-size:28.5px;line-height:34px;color:#111827;-webkit-text-stroke:.5px #111827">12.5%</div>
<div class="abs nw" style="left:939px;top:443.5px;width:100px;text-align:center;font-size:14.1px;line-height:17px;color:#4b5563">Won revenue</div>
<div class="abs nw" style="left:939px;top:466px;width:100px;text-align:center;font-size:20px;line-height:24px;font-weight:700;color:#111827">A$4.2K</div>


<div class="abs" style="left:1145px;top:780.5px;width:45px;height:45px;border-radius:50%;background:#1a1a7c;box-shadow:0 1px 3px rgba(0,0,0,.25)"></div>
<svg class="abs" style="left:1145px;top:780.5px;width:45px;height:45px" viewBox="0 0 45 45" fill="none" stroke="#f0962e" stroke-width="1.1" stroke-linecap="round" stroke-linejoin="round">
<path d="M10.2 15C10.5 8 15.5 4.8 22.4 4.8S34.3 8 34.6 15"/>
<rect x="11.8" y="7.2" width="21.4" height="20.2" rx="8.5" fill="#23203f"/>
<rect x="14.5" y="12.4" width="16" height="12.3" rx="3.8" fill="#7a5be0" stroke-width=".9"/>
<rect x="7.8" y="14.6" width="3.9" height="8" rx="1.9" fill="#2a2a6a"/><rect x="33.2" y="14.6" width="3.9" height="8" rx="1.9" fill="#2a2a6a"/>
<path d="M35.3 22.6c0 2.3-3 3.2-8 3.1" stroke-width=".9"/><rect x="25" y="24.6" width="2.8" height="1.7" rx=".8" fill="#23203f" stroke-width=".7"/>
<circle cx="18.8" cy="18.4" r=".8" fill="#2b2470" stroke="#2b2470" stroke-width=".5"/><circle cx="26.2" cy="18.4" r=".8" fill="#2b2470" stroke="#2b2470" stroke-width=".5"/>
<path d="M20.3 20.5c1.4 1.3 3 1.3 4.4 0" stroke="#2b2470" stroke-width=".8"/>
<path d="M13.8 38.8c-.5-2.5-1-4.5-2.6-5.6 1.2-2.8 3.8-4.6 6.3-5.3h10c2.5.7 5.1 2.5 6.3 5.3-1.6 1.1-2.1 3.1-2.6 5.6z" fill="#26286f" stroke-width=".9"/>
<path d="M18 28l2.3 2.6 2.2-2 2.2 2 2.3-2.6" stroke-width=".9"/>
<path d="M22.5 29v3" stroke-width=".8"/>
<path d="M26.5 37.5l2-5 1.5.5-2 5z" stroke="#e9e6f5" stroke-width=".8"/>
</svg>

</div>
</body>
</html>
